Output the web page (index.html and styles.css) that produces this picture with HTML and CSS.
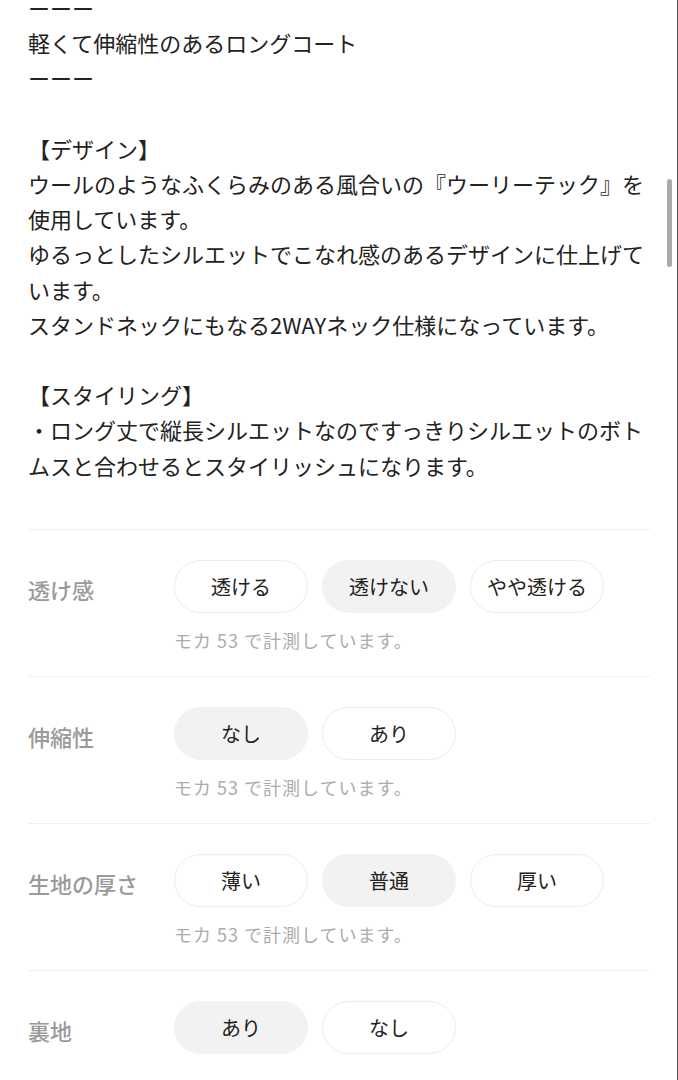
FILE: index.html
```html
<!DOCTYPE html>
<html lang="ja">
<head>
<meta charset="utf-8">
<link rel="stylesheet" href="styles.css">
</head>
<body>
<div class="page">
  <div class="desc">
    <p>ーーー</p>
    <p>軽くて伸縮性のあるロングコート</p>
    <p>ーーー</p>
    <p class="blank">&nbsp;</p>
    <p>【デザイン】</p>
    <p>ウールのようなふくらみのある風合いの『ウーリーテック』を使用しています。</p>
    <p>ゆるっとしたシルエットでこなれ感のあるデザインに仕上げています。</p>
    <p>スタンドネックにもなる2WAYネック仕様になっています。</p>
    <p class="blank">&nbsp;</p>
    <p>【スタイリング】</p>
    <p>・ロング丈で縦長シルエットなのですっきりシルエットのボトムスと合わせるとスタイリッシュになります。</p>
  </div>

  <div class="specs">
    <div class="spec">
      <div class="label">透け感</div>
      <div class="chips">
        <span class="chip">透ける</span>
        <span class="chip on">透けない</span>
        <span class="chip">やや透ける</span>
      </div>
      <div class="note">モカ 53 で計測しています。</div>
    </div>
    <div class="spec">
      <div class="label">伸縮性</div>
      <div class="chips">
        <span class="chip on">なし</span>
        <span class="chip">あり</span>
      </div>
      <div class="note">モカ 53 で計測しています。</div>
    </div>
    <div class="spec">
      <div class="label">生地の厚さ</div>
      <div class="chips">
        <span class="chip">薄い</span>
        <span class="chip on">普通</span>
        <span class="chip">厚い</span>
      </div>
      <div class="note">モカ 53 で計測しています。</div>
    </div>
    <div class="spec">
      <div class="label">裏地</div>
      <div class="chips">
        <span class="chip on">あり</span>
        <span class="chip">なし</span>
      </div>
    </div>
  </div>

  <div class="scroll-thumb"></div>
</div>
</body>
</html>
```
FILE: styles.css
```css
html, body {
  margin: 0;
  padding: 0;
  background: #fff;
}
body {
  font-family: "Noto Sans CJK JP", "Noto Sans", sans-serif;
  color: #222;
}
.page {
  position: relative;
  width: 677px;
  height: 1080px;
  overflow: hidden;
  border-right: 1px solid #555;
}
.desc {
  margin-top: -10px;
  padding: 0 28px;
  font-size: 22px;
  line-height: 35.2px;
}
.desc p {
  margin: 0;
}
.specs {
  margin: 46px 27px 0 28px;
}
.spec {
  display: grid;
  grid-template-columns: 146px 1fr;
  border-top: 1px solid #efefef;
  padding: 30px 0 23px;
}
.label {
  grid-column: 1;
  grid-row: 1;
  height: 53px;
  line-height: 58px;
  font-size: 22px;
  font-weight: 500;
  color: #9a9a9a;
}
.chips {
  grid-column: 2;
  grid-row: 1;
  display: flex;
  gap: 14px;
}
.chip {
  box-sizing: border-box;
  width: 134px;
  height: 53px;
  border: 1px solid #ececec;
  border-radius: 27px;
  display: flex;
  align-items: center;
  justify-content: center;
  font-size: 20px;
  color: #222;
  background: #fff;
}
.chip.on {
  background: #f2f2f2;
  border-color: #f2f2f2;
}
.note {
  grid-column: 2;
  grid-row: 2;
  margin-top: 14px;
  font-size: 18px;
  letter-spacing: 1px;
  line-height: 26px;
  color: #ababab;
}
.scroll-thumb {
  position: absolute;
  left: 667px;
  top: 179px;
  width: 5px;
  height: 88px;
  border-radius: 3px;
  background: #ababab;
}
```
